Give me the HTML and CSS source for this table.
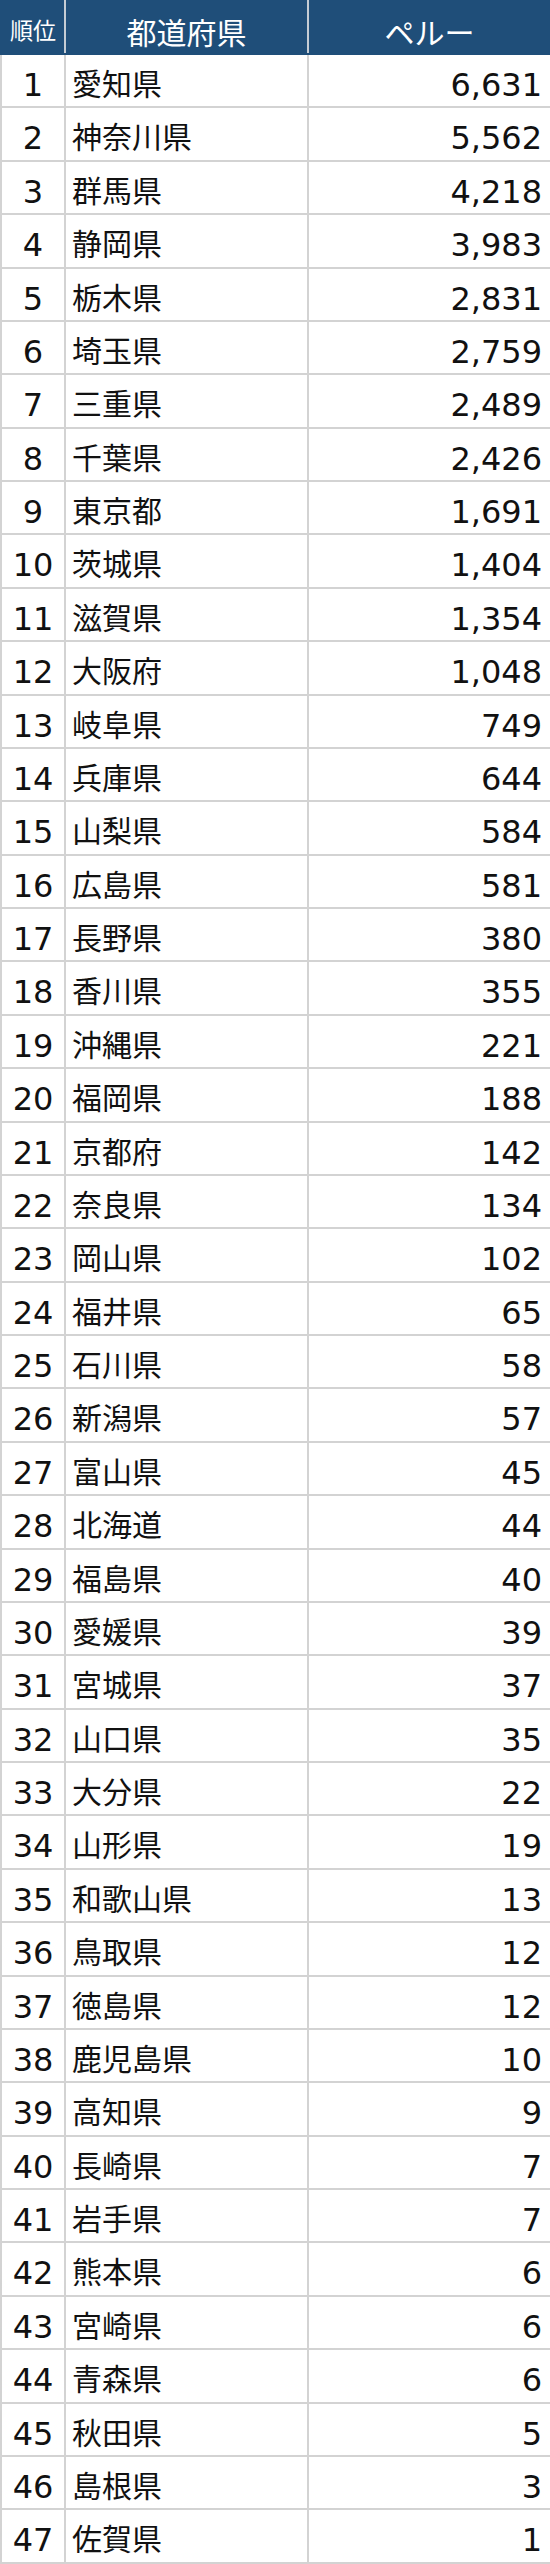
FILE: index.html
```html
<!DOCTYPE html>
<html lang="ja">
<head>
<meta charset="utf-8">
<title>ペルー 都道府県別</title>
<link rel="stylesheet" href="styles.css">
</head>
<body>
<table class="ranking">
<colgroup><col class="c-rank"><col class="c-pref"><col class="c-val"></colgroup>
<thead>
<tr><th class="rank-h">順位</th><th class="pref-h">都道府県</th><th class="val-h">ペルー</th></tr>
</thead>
<tbody>
<tr><td class="rank">1</td><td class="pref">愛知県</td><td class="val">6,631</td></tr>
<tr><td class="rank">2</td><td class="pref">神奈川県</td><td class="val">5,562</td></tr>
<tr><td class="rank">3</td><td class="pref">群馬県</td><td class="val">4,218</td></tr>
<tr><td class="rank">4</td><td class="pref">静岡県</td><td class="val">3,983</td></tr>
<tr><td class="rank">5</td><td class="pref">栃木県</td><td class="val">2,831</td></tr>
<tr><td class="rank">6</td><td class="pref">埼玉県</td><td class="val">2,759</td></tr>
<tr><td class="rank">7</td><td class="pref">三重県</td><td class="val">2,489</td></tr>
<tr><td class="rank">8</td><td class="pref">千葉県</td><td class="val">2,426</td></tr>
<tr><td class="rank">9</td><td class="pref">東京都</td><td class="val">1,691</td></tr>
<tr><td class="rank">10</td><td class="pref">茨城県</td><td class="val">1,404</td></tr>
<tr><td class="rank">11</td><td class="pref">滋賀県</td><td class="val">1,354</td></tr>
<tr><td class="rank">12</td><td class="pref">大阪府</td><td class="val">1,048</td></tr>
<tr><td class="rank">13</td><td class="pref">岐阜県</td><td class="val">749</td></tr>
<tr><td class="rank">14</td><td class="pref">兵庫県</td><td class="val">644</td></tr>
<tr><td class="rank">15</td><td class="pref">山梨県</td><td class="val">584</td></tr>
<tr><td class="rank">16</td><td class="pref">広島県</td><td class="val">581</td></tr>
<tr><td class="rank">17</td><td class="pref">長野県</td><td class="val">380</td></tr>
<tr><td class="rank">18</td><td class="pref">香川県</td><td class="val">355</td></tr>
<tr><td class="rank">19</td><td class="pref">沖縄県</td><td class="val">221</td></tr>
<tr><td class="rank">20</td><td class="pref">福岡県</td><td class="val">188</td></tr>
<tr><td class="rank">21</td><td class="pref">京都府</td><td class="val">142</td></tr>
<tr><td class="rank">22</td><td class="pref">奈良県</td><td class="val">134</td></tr>
<tr><td class="rank">23</td><td class="pref">岡山県</td><td class="val">102</td></tr>
<tr><td class="rank">24</td><td class="pref">福井県</td><td class="val">65</td></tr>
<tr><td class="rank">25</td><td class="pref">石川県</td><td class="val">58</td></tr>
<tr><td class="rank">26</td><td class="pref">新潟県</td><td class="val">57</td></tr>
<tr><td class="rank">27</td><td class="pref">富山県</td><td class="val">45</td></tr>
<tr><td class="rank">28</td><td class="pref">北海道</td><td class="val">44</td></tr>
<tr><td class="rank">29</td><td class="pref">福島県</td><td class="val">40</td></tr>
<tr><td class="rank">30</td><td class="pref">愛媛県</td><td class="val">39</td></tr>
<tr><td class="rank">31</td><td class="pref">宮城県</td><td class="val">37</td></tr>
<tr><td class="rank">32</td><td class="pref">山口県</td><td class="val">35</td></tr>
<tr><td class="rank">33</td><td class="pref">大分県</td><td class="val">22</td></tr>
<tr><td class="rank">34</td><td class="pref">山形県</td><td class="val">19</td></tr>
<tr><td class="rank">35</td><td class="pref">和歌山県</td><td class="val">13</td></tr>
<tr><td class="rank">36</td><td class="pref">鳥取県</td><td class="val">12</td></tr>
<tr><td class="rank">37</td><td class="pref">徳島県</td><td class="val">12</td></tr>
<tr><td class="rank">38</td><td class="pref">鹿児島県</td><td class="val">10</td></tr>
<tr><td class="rank">39</td><td class="pref">高知県</td><td class="val">9</td></tr>
<tr><td class="rank">40</td><td class="pref">長崎県</td><td class="val">7</td></tr>
<tr><td class="rank">41</td><td class="pref">岩手県</td><td class="val">7</td></tr>
<tr><td class="rank">42</td><td class="pref">熊本県</td><td class="val">6</td></tr>
<tr><td class="rank">43</td><td class="pref">宮崎県</td><td class="val">6</td></tr>
<tr><td class="rank">44</td><td class="pref">青森県</td><td class="val">6</td></tr>
<tr><td class="rank">45</td><td class="pref">秋田県</td><td class="val">5</td></tr>
<tr><td class="rank">46</td><td class="pref">島根県</td><td class="val">3</td></tr>
<tr><td class="rank">47</td><td class="pref">佐賀県</td><td class="val">1</td></tr>
</tbody>
</table>
</body>
</html>
```

FILE: styles.css
```css
html, body {
  margin: 0;
  padding: 0;
  background: #ffffff;
}

.ranking {
  width: 550px;
  height: 2564px;
  table-layout: fixed;
  border-collapse: collapse;
  font-family: "Noto Sans CJK JP", "Noto Sans", sans-serif;
  color: #111111;
}

.c-rank { width: 64px; }
.c-pref { width: 243px; }
.c-val { width: 243px; }

.ranking th,
.ranking td {
  border: 2px solid #d3d3d3;
  padding: 0;
  height: 53px;
  box-sizing: border-box;
  vertical-align: top;
  font-size: 30px;
  line-height: 30px;
  font-weight: 400;
  white-space: nowrap;
  overflow: hidden;
}

.ranking thead th {
  background: #1f4e79;
  color: #ffffff;
  text-align: center;
  padding-top: 14px;
  border-top-color: #1f4e79;
  border-bottom-color: #1f4e79;
  border-left-color: #c5ccd4;
  border-right-color: #c5ccd4;
}

.ranking thead th:first-child { border-left-color: #1f4e79; }
.ranking thead th:last-child { border-right-color: #1f4e79; }

.ranking .rank-h {
  font-size: 23px;
  padding-top: 12px;
}

.ranking .rank,
.ranking .val {
  font-family: "DejaVu Sans", "Noto Sans CJK JP", sans-serif;
  font-size: 32px;
  padding-top: 15px;
}

.ranking .rank {
  text-align: center;
}

.ranking .pref {
  text-align: left;
  padding-left: 6px;
  padding-top: 12px;
}

.ranking .val {
  text-align: right;
  padding-right: 8px;
}
```
